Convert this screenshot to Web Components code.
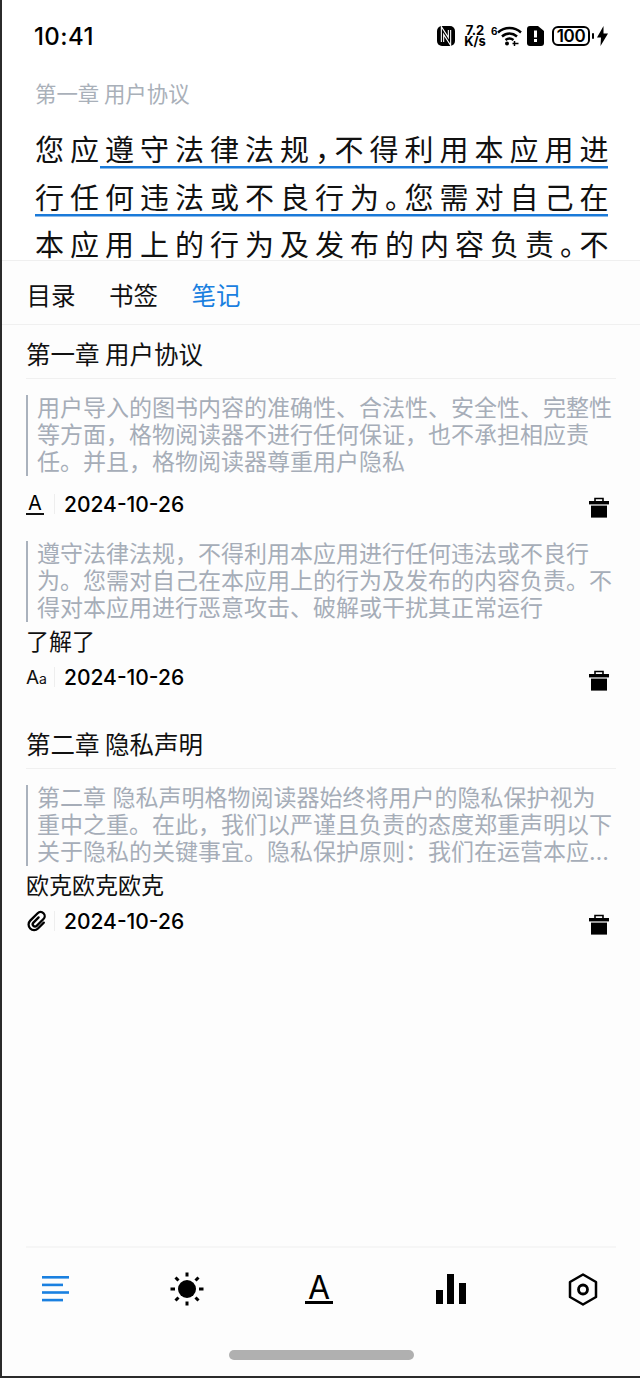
<!DOCTYPE html>
<html lang="zh-CN">
<head>
<meta charset="utf-8">
<title>笔记</title>
<style>
  html, body { margin: 0; padding: 0; background: #fff; }
  body { font-family: "Noto Sans CJK SC", "Noto Sans", sans-serif; color: #111; }
</style>
</head>
<body>
<reader-app>
  <status-bar slot="status"></status-bar>
  <reader-page slot="reader"></reader-page>
  <notes-panel slot="panel">
    <chapter-notes title="第一章 用户协议">
      <note-card date="2024-10-26" kind="underline">用户导入的图书内容的准确性、合法性、安全性、完整性等方面，格物阅读器不进行任何保证，也不承担相应责任。并且，格物阅读器尊重用户隐私</note-card>
      <note-card date="2024-10-26" kind="font" note="了解了">遵守法律法规，不得利用本应用进行任何违法或不良行为。您需对自己在本应用上的行为及发布的内容负责。不得对本应用进行恶意攻击、破解或干扰其正常运行</note-card>
    </chapter-notes>
    <chapter-notes title="第二章 隐私声明">
      <note-card date="2024-10-26" kind="clip" note="欧克欧克欧克">第二章 隐私声明格物阅读器始终将用户的隐私保护视为重中之重。在此，我们以严谨且负责的态度郑重声明以下关于隐私的关键事宜。隐私保护原则：我们在运营本应用的过程中，严格遵守相关法律法规，切实保护用户的个人信息安全</note-card>
    </chapter-notes>
  </notes-panel>
</reader-app>

<script>
  const ICONS = {
    trash: '<svg viewBox="0 0 20 22" width="20" height="22"><path d="M6 4V1.5h8V4" fill="none" stroke="#000" stroke-width="1.6"/><rect x="0" y="4" width="20" height="3.4" fill="#000"/><rect x="2" y="8.6" width="16" height="12" fill="#000"/></svg>',
    clip: '<svg viewBox="0 0 24 24" width="22" height="22" fill="none" stroke="#000" stroke-width="2.5" stroke-linecap="round" stroke-linejoin="round" style="overflow:visible"><path transform="rotate(45 12 12)" d="M10.500 8v8a2.500 2.500 0 0 0 5 0V5.500a4.500 4.500 0 0 0-9 0V17a6 6 0 0 0 12 0V8"/></svg>',
    menu: '<svg viewBox="0 0 28 26" width="28" height="26" fill="#1a80e0"><rect x="0" y="0" width="27" height="2.6"/><rect x="0" y="7.6" width="21" height="2.6"/><rect x="0" y="15.2" width="27" height="2.6"/><rect x="0" y="22.8" width="21" height="2.6"/></svg>',
    sun: '<svg viewBox="0 0 36 36" width="36" height="36"><circle cx="18" cy="18" r="9" fill="#000"/><g stroke="#000" stroke-width="3"><path d="M18 1.5v4M18 30.5v4M1.5 18h4.5M30 18h4.5M6.5 6.5l3 3M26.5 26.5l3 3M29.5 6.5l-3 3M9.5 26.5l-3 3"/></g></svg>',
    bars: '<svg viewBox="0 0 30 30" width="30" height="30" fill="#000"><rect x="0" y="16" width="7" height="14"/><rect x="11" y="0" width="7" height="30"/><rect x="23" y="9" width="7" height="21"/></svg>',
    hex: '<svg viewBox="0 0 30 33" width="30" height="33" fill="none" stroke="#000"><path d="M15 1.5l13 7.500v15l-13 7.500L2 24V9z" stroke-width="2.5" stroke-linejoin="round"/><circle cx="15" cy="16.5" r="4.5" stroke-width="2.8"/></svg>'
  };

  class ReaderApp extends HTMLElement {
    connectedCallback() {
      this.attachShadow({ mode: 'open' });
      this.shadowRoot.innerHTML = `
        <style>
          :host {
            display: flex;
            flex-direction: column;
            box-sizing: border-box;
            width: 640px;
            height: 1378px;
            overflow: hidden;
            background: #fff;
            border-left: 2px solid #2b2b2b;
            border-bottom: 2px solid #2b2b2b;
          }
          ::slotted([slot="panel"]) { flex: 1; min-height: 0; }
        </style>
        <slot name="status"></slot>
        <slot name="reader"></slot>
        <slot name="panel"></slot>
      `;
    }
  }

  class StatusBar extends HTMLElement {
    connectedCallback() {
      this.attachShadow({ mode: 'open' });
      this.shadowRoot.innerHTML = `
        <style>
          :host {
            display: flex;
            align-items: center;
            justify-content: space-between;
            height: 72px;
            padding: 0 32px;
            font-family: Inter, "Liberation Sans", sans-serif;
            color: #000;
          }
          .time { font-size: 24px; font-weight: 500; letter-spacing: .4px; }
          .icons { display: flex; align-items: center; }
          svg { display: block; }
          .speed {
            display: flex;
            flex-direction: column;
            align-items: center;
            width: 22px;
            margin-left: 9px;
            font-size: 13px;
            font-weight: 700;
            line-height: 11px;
          }
          .wifi { display: flex; align-items: flex-start; margin-left: 5px; }
          .wifi span { font-size: 10px; font-weight: 700; line-height: 10px; width: 6px; }
          .pill { margin-left: 5px; }
          .battery {
            box-sizing: border-box;
            width: 38px;
            height: 20px;
            margin-left: 8px;
            border: 2px solid #000;
            border-radius: 6px;
            font-size: 17px;
            font-weight: 600;
            line-height: 16px;
            text-align: center;
            letter-spacing: -.3px;
          }
          .tip { width: 2px; height: 6px; margin-left: 2px; background: #000; border-radius: 1px; }
          .bolt { margin-left: 3px; }
        </style>
        <span class="time">10:41</span>
        <div class="icons">
          <svg width="18" height="20" viewBox="0 0 18 20"><rect width="18" height="20" rx="5" fill="#000"/><path d="M5.500 16V4.500L12.500 15.500V4" fill="none" stroke="#fff" stroke-width="3.400"/><path d="M5.500 16V4.500L12.500 15.500V4" fill="none" stroke="#000" stroke-width="1.200"/></svg>
          <div class="speed"><span>7.2</span><span>K/s</span></div>
          <div class="wifi">
            <span>6</span>
            <svg width="25" height="20" viewBox="0 0 25 20" fill="none" stroke="#000" stroke-width="2.4"><path d="M1 6.500C7.500 .5 17.500 .5 24 6.500"/><path d="M5 10.500c4.500-4 10.500-4 15 0"/><path d="M8.500 14c2.500-2 5.500-2 8 0"/><circle cx="10" cy="17.500" r="2" fill="#000" stroke="none"/><path d="M15.500 17.500h6" stroke-width="1.5"/><path d="M17.500 15v5" stroke-width="1.5"/></svg>
          </div>
          <svg class="pill" width="17" height="20" viewBox="0 0 17 20"><path d="M3 0h8l6 5v12a3 3 0 0 1-3 3H3a3 3 0 0 1-3-3V3a3 3 0 0 1 3-3z" fill="#000"/><rect x="7" y="4.500" width="3" height="7" fill="#fff"/><rect x="7" y="13" width="3" height="3" fill="#fff"/></svg>
          <div class="battery">100</div>
          <div class="tip"></div>
          <svg class="bolt" width="11" height="20" viewBox="0 0 11 20"><path d="M6.500 0L0 11.500h4L3.500 20 11 7.500H6.500z" fill="#000"/></svg>
        </div>
      `;
    }
  }

  class ReaderPage extends HTMLElement {
    connectedCallback() {
      this.attachShadow({ mode: 'open' });
      this.shadowRoot.innerHTML = `
        <style>
          :host {
            display: block;
            box-sizing: border-box;
            height: 188px;
            padding: 0 0 0 33px;
            overflow: hidden;
            background: #fff;
            font-family: "Noto Sans CJK SC", sans-serif;
          }
          .label { font-size: 21.4px; line-height: 41px; color: #a9b0b9; }
          .body { margin-top: 12px; font-size: 29px; line-height: 47.5px; letter-spacing: 6px; color: #111; white-space: nowrap; }
          .line { display: block; height: 47.5px; }
          .mark {
            background: linear-gradient(#1a7ad9, #1a7ad9) no-repeat left bottom .5px / 100% 2.5px;
          }
          .first { padding-left: 5px; margin-left: -5px; }
          .end { letter-spacing: -1px; }
          .p { display: inline-block; width: 19.5px; letter-spacing: 0; }
        </style>
        <div class="label">第一章 用户协议</div>
        <div class="body">
          <span class="line">您应<span class="mark first">遵守法律法规<span class="p">，</span>不得利用本应用<span class="end">进</span></span></span>
          <span class="line"><span class="mark">行任何违法或不良行为<span class="p">。</span>您需对自己<span class="end">在</span></span></span>
          <span class="line">本应用上的行为及发布的内容负责<span class="p">。</span>不</span>
        </div>
      `;
    }
  }

  class NotesPanel extends HTMLElement {
    connectedCallback() {
      this.attachShadow({ mode: 'open' });
      this.shadowRoot.innerHTML = `
        <style>
          :host {
            display: flex;
            flex-direction: column;
            background: #fdfdfd;
            border-top: 1px solid #efefef;
            font-family: "Noto Sans CJK SC", sans-serif;
          }
          .tabs {
            display: flex;
            gap: 33.5px;
            align-items: center;
            box-sizing: border-box;
            height: 64px;
            padding: 4px 24.5px 0;
            font-size: 24.5px;
            color: #111;
            border-bottom: 1px solid #f0f0f0;
          }
          .active { color: #1a80e0; }
          .list { flex: 1; min-height: 0; padding: 0 24px; }
          .nav {
            display: flex;
            justify-content: space-between;
            align-items: center;
            height: 82px;
            margin: 0 24px;
            padding: 0 18px 0 14px;
            border-top: 2px solid #f6f6f6;
          }
          .nav div { display: flex; align-items: center; justify-content: center; width: 30px; }
          .nav svg { display: block; flex: none; }
          .nav div:first-child svg { margin-left: 1px; }
          .letter { display: flex; justify-content: center; width: 28px; height: 27px; border-bottom: 3px solid #000; font-family: Inter, sans-serif; font-size: 32px; line-height: 27px; color: #000; }
          .home { display: flex; justify-content: center; height: 46px; }
          .home span { width: 185px; height: 10px; margin-top: 20px; border-radius: 5px; background: #b0b0b0; }
        </style>
        <div class="tabs">
          <span>目录</span><span>书签</span><span class="active">笔记</span>
        </div>
        <div class="list"><slot></slot></div>
        <div class="nav">
          <div>${ICONS.menu}</div>
          <div>${ICONS.sun}</div>
          <div><span class="letter">A</span></div>
          <div>${ICONS.bars}</div>
          <div>${ICONS.hex}</div>
        </div>
        <div class="home"><span></span></div>
      `;
    }
  }

  class ChapterNotes extends HTMLElement {
    connectedCallback() {
      this.attachShadow({ mode: 'open' });
      this.shadowRoot.innerHTML = `
        <style>
          :host { display: block; padding-bottom: 20px; }
          h2 {
            margin: 0 0 16px;
            padding: 11px 0 6px;
            font-size: 24.5px;
            font-weight: 400;
            line-height: 36px;
            color: #111;
            border-bottom: 1px solid #f0f0f0;
          }
          .cards { display: flex; flex-direction: column; gap: 19px; }
        </style>
        <h2></h2>
        <div class="cards"><slot></slot></div>
      `;
      this.shadowRoot.querySelector('h2').textContent = this.getAttribute('title');
    }
  }

  class NoteCard extends HTMLElement {
    connectedCallback() {
      const note = this.getAttribute('note');
      const kind = this.getAttribute('kind');
      let icon = ICONS.clip;
      if (kind === 'underline') icon = '<span class="u">A</span>';
      if (kind === 'font') icon = '<span class="aa">A<small>a</small></span>';
      this.attachShadow({ mode: 'open' });
      this.shadowRoot.innerHTML = `
        <style>
          :host { display: block; }
          .quote {
            box-sizing: border-box;
            height: 81px;
            padding-left: 9px;
            border-left: 2.5px solid #aab2bd;
          }
          .text {
            display: -webkit-box;
            -webkit-box-orient: vertical;
            -webkit-line-clamp: 3;
            overflow: hidden;
            font-family: Inter, "Noto Sans CJK SC", sans-serif;
            font-size: 23px;
            line-height: 27px;
            color: #a6adb8;
          }
          .note { margin-top: 2px; height: 35px; font-size: 23px; line-height: 32px; color: #111; }
          .meta { display: flex; align-items: center; height: 36px; margin-top: 10px; color: #000; }
          .note + .meta { margin-top: 0; }
          .icon {
            display: flex;
            align-items: center;
            width: 28px;
            height: 20px;
            border-right: 1px solid #eee;
            font-family: Inter, sans-serif;
          }
          .icon svg { display: block; }
          .u { display: block; width: 18px; height: 19px; line-height: 18px; font-size: 20px; text-align: center; border-bottom: 2px solid #111; }
          .aa { font-size: 19px; color: #111; }
          .aa small { font-size: 14px; }
          .date { margin-left: 9px; font-family: Inter, "Liberation Sans", sans-serif; font-size: 21px; font-weight: 500; }
          .trash { margin: 7px 7px 0 auto; }
          .trash svg { display: block; }
        </style>
        <div class="quote"><div class="text"><slot></slot></div></div>
        ${note ? `<div class="note">${note}</div>` : ''}
        <div class="meta">
          <div class="icon">${icon}</div>
          <span class="date">${this.getAttribute('date')}</span>
          <div class="trash">${ICONS.trash}</div>
        </div>
      `;
    }
  }

  customElements.define('reader-app', ReaderApp);
  customElements.define('status-bar', StatusBar);
  customElements.define('reader-page', ReaderPage);
  customElements.define('notes-panel', NotesPanel);
  customElements.define('chapter-notes', ChapterNotes);
  customElements.define('note-card', NoteCard);
</script>
</body>
</html>
